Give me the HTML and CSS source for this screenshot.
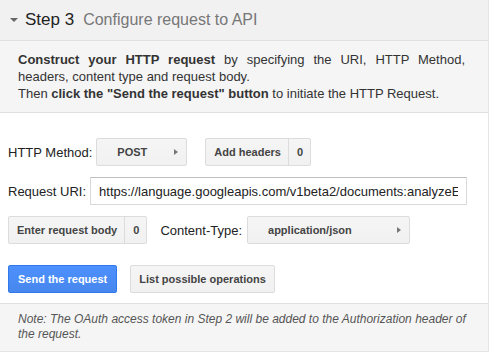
FILE: index.html
```html
<!DOCTYPE html>
<html lang="en">
<head>
    <meta charset="UTF-8">
    <title>Step 3 - Configure request to API</title>
    <link rel="stylesheet" href="styles.css">
</head>
<body>
    <div class="panel">
        <div class="step-header">
            <span class="caret"></span>
            <span class="step-num">Step 3</span>
            <span class="step-title">Configure request to API</span>
        </div>

        <div class="intro">
            <b>Construct your HTTP request</b> by specifying the URI, HTTP Method, headers, content type and request body.<br>
            Then <b>click the "Send the request" button</b> to initiate the HTTP Request.
        </div>

        <div class="form">
            <div class="row">
                <label class="lbl">HTTP Method:</label>
                <button class="btn select method">POST <span class="arrow"></span></button>
                <button class="btn split headers-btn"><span class="main">Add headers</span><span class="count">0</span></button>
            </div>

            <div class="row">
                <label class="lbl">Request URI:</label>
                <input class="uri" type="text" value="https://language.googleapis.com/v1beta2/documents:analyzeEntities">
            </div>

            <div class="row">
                <button class="btn split"><span class="main">Enter request body</span><span class="count">0</span></button>
                <label class="lbl ctype">Content-Type:</label>
                <button class="btn select ctype-btn">application/json <span class="arrow"></span></button>
            </div>

            <div class="row actions">
                <button class="btn blue">Send the request</button>
                <button class="btn">List possible operations</button>
            </div>
        </div>

        <div class="note">
            Note: The OAuth access token in Step 2 will be added to the Authorization header of the request.
        </div>
    </div>
</body>
</html>
```

FILE: styles.css
```css
body {
    margin: 0;
    background: #fff;
    font-family: Arial, "Liberation Sans", sans-serif;
    color: #222;
}
.panel {
    width: 488px;
    border-right: 1px solid #e5e5e5;
    border-bottom: 1px solid #e5e5e5;
}
.step-header {
    height: 40px;
    background: #f1f1f1;
    border-bottom: 1px solid #e0e0e0;
    display: flex;
    align-items: center;
    padding-left: 10px;
}
.caret {
    width: 0;
    height: 0;
    border-left: 4px solid transparent;
    border-right: 4px solid transparent;
    border-top: 4px solid #666;
    margin-right: 7px;
}
.step-num {
    font-size: 17px;
    color: #222;
    margin-right: 9px;
}
.step-title {
    font-size: 16px;
    color: #777;
}
.intro {
    background: #f5f5f5;
    border-bottom: 1px solid #e0e0e0;
    padding: 10px 23px 10px 18px;
    font-size: 13px;
    line-height: 17px;
    text-align: justify;
    color: #333;
}
.form {
    padding: 25px 8px 10px 8px;
    border-bottom: 1px solid #e0e0e0;
}
.row {
    display: flex;
    align-items: center;
    margin-bottom: 11px;
}
.row.actions {
    margin-top: 21px;
    margin-bottom: 0;
}
.lbl {
    font-size: 13px;
    color: #222;
    margin-right: 4px;
}
.lbl.ctype {
    margin-left: 13px;
    margin-right: 5px;
}
.btn {
    height: 28px;
    box-sizing: border-box;
    border: 1px solid #dcdcdc;
    border-radius: 2px;
    background: linear-gradient(#f5f5f5, #f1f1f1);
    font-family: Arial, "Liberation Sans", sans-serif;
    font-weight: bold;
    font-size: 11px;
    color: #444;
    padding: 0 8px;
    display: flex;
    align-items: center;
}
.btn.select {
    padding-left: 20px;
    position: relative;
}
.btn .arrow {
    width: 0;
    height: 0;
    border-top: 3.5px solid transparent;
    border-bottom: 3.5px solid transparent;
    border-left: 4px solid #777;
    position: absolute;
    right: 8px;
    top: 10px;
}
.method {
    width: 91px;
}
.headers-btn {
    margin-left: 18px;
}
.ctype-btn {
    width: 163px;
    padding-left: 45px;
}
.btn.split {
    padding: 0;
}
.btn.split .main {
    padding: 0 7px 0 8px;
    height: 100%;
    display: flex;
    align-items: center;
    border-right: 1px solid #dcdcdc;
}
.btn.split .count {
    padding: 0 7px 0 8px;
}
.uri {
    width: 377px;
    height: 28px;
    box-sizing: border-box;
    border: 1px solid #d9d9d9;
    border-top-color: #c0c0c0;
    padding: 0 8px;
    font-family: Arial, "Liberation Sans", sans-serif;
    font-size: 13px;
    color: #222;
}
.btn.blue {
    background: linear-gradient(#4d90fe, #4787ed);
    border-color: #3079ed;
    color: #fff;
    padding: 0 9px;
    margin-right: 13px;
}
.note {
    background: #f5f5f5;
    padding: 8px 20px 9px 18px;
    font-size: 12px;
    line-height: 15px;
    font-style: italic;
    color: #555;
}
```
